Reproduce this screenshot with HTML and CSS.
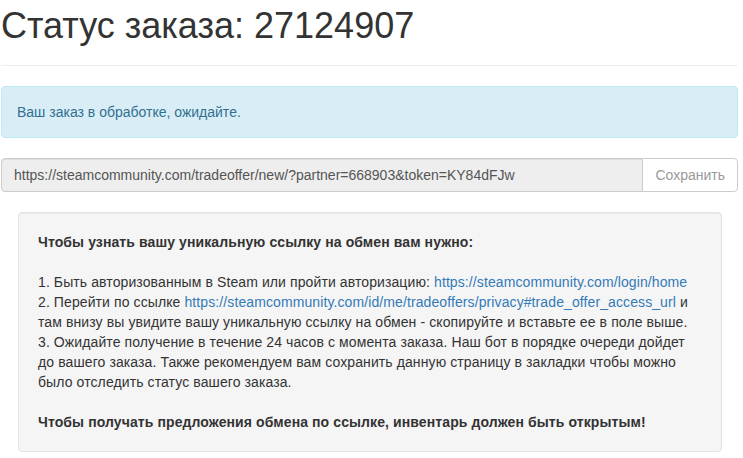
FILE: index.html
```html
<!DOCTYPE html>
<html>

<head>
  <meta charset="UTF-8">
  <title>Статус заказа</title>
  <link rel="stylesheet" href="styles.css">
</head>

<body>
  <div class="container">
    <div class="page-header">
      <h1>Статус заказа: 27124907</h1>
    </div>

    <div class="alert">Ваш заказ в обработке, ожидайте.</div>

    <div class="input-group">
      <input type="text" class="trade-url" value="https://steamcommunity.com/tradeoffer/new/?partner=668903&amp;token=KY84dFJw" readonly>
      <button class="btn-save" disabled>Сохранить</button>
    </div>

    <div class="well">
      <p class="strong">Чтобы узнать вашу уникальную ссылку на обмен вам нужно:</p>
      <p>
        1. Быть авторизованным в Steam или пройти авторизацию: <a href="#">https://steamcommunity.com/login/home</a><br>
        2. Перейти по ссылке <a href="#">https://steamcommunity.com/id/me/tradeoffers/privacy#trade_offer_access_url</a> и<br>
        там внизу вы увидите вашу уникальную ссылку на обмен - скопируйте и вставьте ее в поле выше.<br>
        3. Ожидайте получение в течение 24 часов с момента заказа. Наш бот в порядке очереди дойдет<br>
        до вашего заказа. Также рекомендуем вам сохранить данную страницу в закладки чтобы можно<br>
        было отследить статус вашего заказа.
      </p>
      <p class="strong">Чтобы получать предложения обмена по ссылке, инвентарь должен быть открытым!</p>
    </div>
  </div>
</body>

</html>
```

FILE: styles.css
```css
* {
  box-sizing: border-box;
}

body {
  margin: 0;
  font-family: "Liberation Sans", Arial, sans-serif;
  font-size: 14px;
  line-height: 20px;
  color: #333;
  background: #fff;
}

.container {
  width: 737px;
  margin-left: 1px;
}

.page-header {
  padding-bottom: 9px;
  margin-bottom: 20px;
  border-bottom: 1px solid #eee;
}

h1 {
  margin: 6px 0 10px;
  font-size: 36px;
  font-weight: normal;
  line-height: 1.1;
  color: #333;
}

.alert {
  padding: 15px;
  margin-bottom: 20px;
  border: 1px solid #bce8f1;
  border-radius: 4px;
  background: #d9edf7;
  color: #31708f;
}

.input-group {
  display: flex;
  margin-bottom: 20px;
}

.trade-url {
  flex: 1;
  height: 34px;
  padding: 6px 12px;
  font-family: inherit;
  font-size: 14px;
  color: #555;
  background: #eee;
  border: 1px solid #ccc;
  border-radius: 4px 0 0 4px;
  box-shadow: inset 0 1px 1px rgba(0, 0, 0, .075);
  outline: none;
}

.btn-save {
  margin-left: -1px;
  height: 34px;
  padding: 6px 12px;
  font-family: inherit;
  font-size: 14px;
  color: #999;
  background: #fff;
  border: 1px solid #ccc;
  border-radius: 0 4px 4px 0;
}

.well {
  margin: 0 16px 0 17px;
  padding: 19px;
  background: #f5f5f5;
  border: 1px solid #e3e3e3;
  border-radius: 4px;
  box-shadow: inset 0 1px 1px rgba(0, 0, 0, .05);
  letter-spacing: 0.1px;
  white-space: nowrap;
}

.well p {
  margin: 0 0 20px;
}

.well p:last-child {
  margin-bottom: 0;
}

.strong {
  font-weight: bold;
}

a {
  color: #337ab7;
  text-decoration: none;
}
```
